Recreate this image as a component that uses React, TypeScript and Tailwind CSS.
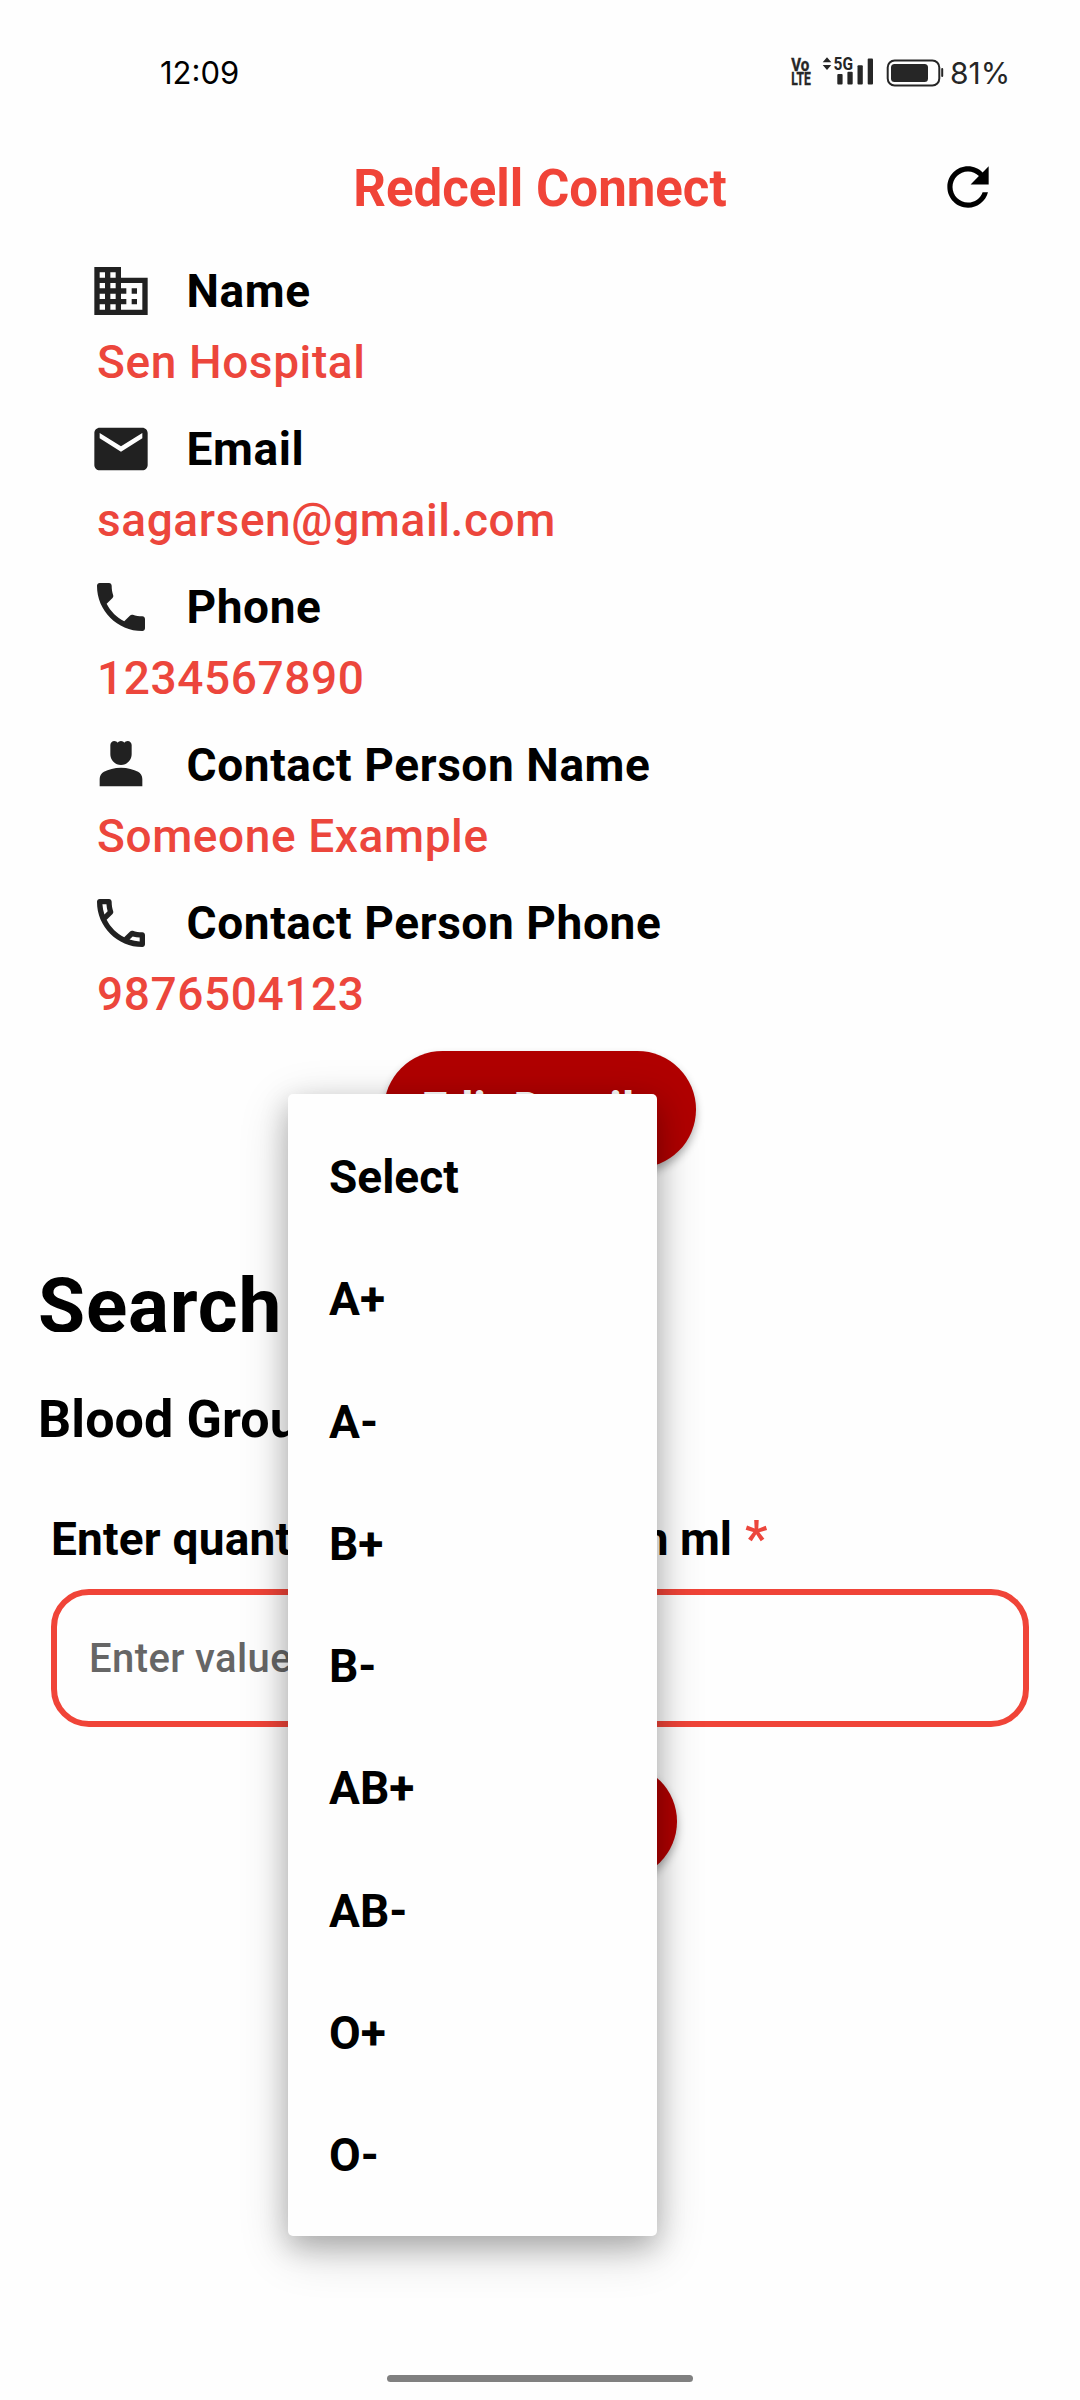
import React from "react";

const ICONS = {
  business:
    "M12 7V3H2v18h20V7H12zM6 19H4v-2h2v2zm0-4H4v-2h2v2zm0-4H4V9h2v2zm0-4H4V5h2v2zm4 12H8v-2h2v2zm0-4H8v-2h2v2zm0-4H8V9h2v2zm0-4H8V5h2v2zm10 12h-8v-2h2v-2h-2v-2h2v-2h-2V9h8v10zm-2-8h-2v2h2v-2zm0 4h-2v2h2v-2z",
  email:
    "M20 4H4c-1.1 0-1.99.9-1.99 2L2 18c0 1.1.9 2 2 2h16c1.1 0 2-.9 2-2V6c0-1.1-.9-2-2-2zm0 4l-8 5-8-5V6l8 5 8-5v2z",
  phone:
    "M6.62 10.79c1.44 2.83 3.76 5.14 6.59 6.59l2.2-2.2c.27-.27.67-.36 1.02-.24 1.12.37 2.33.57 3.57.57.55 0 1 .45 1 1V20c0 .55-.45 1-1 1-9.39 0-17-7.61-17-17 0-.55.45-1 1-1h3.5c.55 0 1 .45 1 1 0 1.25.2 2.45.57 3.57.11.35.03.74-.25 1.02l-2.2 2.2z",
  person:
    "M18.39 14.56C16.71 13.7 14.53 13 12 13s-4.71.7-6.39 1.56C4.61 15.07 4 16.1 4 17.22V20h16v-2.78c0-1.12-.61-2.15-1.61-2.66zM12 12c2.21 0 4-1.79 4-4V4.5C16 3.67 15.33 3 14.5 3c-.52 0-.98.27-1.25.67C12.98 3.27 12.52 3 12 3s-.98.27-1.25.67C10.48 3.27 10.02 3 9.5 3 8.67 3 8 3.67 8 4.5V8c0 2.21 1.79 4 4 4z",
  phoneOutline:
    "M6.54 5c.06.89.21 1.76.45 2.59l-1.2 1.2c-.41-1.2-.67-2.47-.76-3.79h1.51m9.86 12.02c.85.24 1.72.39 2.6.45v1.49c-1.32-.09-2.59-.35-3.8-.75l1.2-1.19M7.5 3H4c-.55 0-1 .45-1 1 0 9.39 7.61 17 17 17 .55 0 1-.45 1-1v-3.49c0-.55-.45-1-1-1-1.24 0-2.45-.2-3.57-.57-.1-.04-.21-.05-.31-.05-.26 0-.51.1-.71.29l-2.2 2.2c-2.83-1.45-5.15-3.76-6.59-6.59l2.2-2.2c.28-.28.36-.67.25-1.02C8.7 6.45 8.5 5.25 8.5 4c0-.55-.45-1-1-1z",
  refresh:
    "M17.65 6.35C16.2 4.9 14.21 4 12 4c-4.42 0-7.99 3.58-7.99 8s3.57 8 7.99 8c3.73 0 6.84-2.55 7.73-6h-2.08c-.82 2.33-3.04 4-5.65 4-3.31 0-6-2.69-6-6s2.69-6 6-6c1.66 0 3.14.69 4.22 1.78L13 11h7V4l-2.35 2.35z",
};

function Icon({ name, className }: { name: keyof typeof ICONS; className: string }) {
  return (
    <svg viewBox="0 0 24 24" fill="currentColor" className={className}>
      <path d={ICONS[name]} />
    </svg>
  );
}

function StatusBar() {
  return (
    <div className="flex h-[144px] items-start justify-between pl-[160px] pr-[72px] pt-[53px] text-[#262626]">
      <span className="font-['Inter'] text-[31px] leading-[40px] text-black">12:09</span>
      <div className="flex items-start">
        <svg width="156" height="40" viewBox="790 53 156 40" fill="#262626" fontFamily="Roboto, sans-serif" fontWeight="700">
          <text x="791.3" y="71.3" fontSize="17.5" textLength="18" lengthAdjust="spacingAndGlyphs" stroke="#262626" strokeWidth="0.4">Vo</text>
          <text x="791.3" y="85.2" fontSize="17.5" textLength="19.5" lengthAdjust="spacingAndGlyphs" stroke="#262626" strokeWidth="0.4">LTE</text>
          <path d="M822.7 62.3 827 57.3l4.3 5zM822.7 65l4.3 5 4.3-5z" />
          <text x="833.5" y="70.3" fontSize="18" textLength="19.5" lengthAdjust="spacingAndGlyphs">5G</text>
          <rect x="837.3" y="74" width="5.3" height="10.6" rx="1" />
          <rect x="847.4" y="71.8" width="5.3" height="12.8" rx="1" />
          <rect x="857.5" y="65.3" width="5.3" height="19.3" rx="1" />
          <rect x="867.7" y="58.5" width="5.3" height="26.1" rx="1" />
          <rect x="887.7" y="60.4" width="51.6" height="25.2" rx="7" fill="none" stroke="#262626" strokeWidth="2" />
          <rect x="891" y="64" width="37" height="18" rx="3.5" />
          <rect x="941.2" y="68" width="2" height="9" rx="1" />
        </svg>
        <span className="ml-[4px] w-[58px] whitespace-nowrap font-['Inter'] text-[30px] leading-[40px]">81%</span>
      </div>
    </div>
  );
}

const DETAILS: { icon: keyof typeof ICONS; label: string; value: string }[] = [
  { icon: "business", label: "Name", value: "Sen Hospital" },
  { icon: "email", label: "Email", value: "sagarsen@gmail.com" },
  { icon: "phone", label: "Phone", value: "1234567890" },
  { icon: "person", label: "Contact Person Name", value: "Someone Example" },
  { icon: "phoneOutline", label: "Contact Person Phone", value: "9876504123" },
];

const OPTIONS = ["Select", "A+", "A-", "B+", "B-", "AB+", "AB-", "O+", "O-"];

export default function App() {
  return (
    <div className="relative flex h-[2400px] w-[1080px] flex-col overflow-hidden bg-[#fefefe] font-['Roboto',sans-serif] text-black">
      <StatusBar />

      <header className="grid h-[115px] grid-cols-[1fr_auto_1fr] items-start">
        <span />
        <h1 className="pt-[15px] text-[51px] font-bold leading-[60px] text-[#f04438]">Redcell Connect</h1>
        <Icon name="refresh" className="mr-[81px] mt-[12px] size-[62px] justify-self-end" />
      </header>

      <section className="flex flex-col pl-[89px]">
        {DETAILS.map((d) => (
          <div key={d.label} className="mb-[16px]">
            <div className="flex h-[64px] items-center">
              <Icon name={d.icon} className="size-[64px] text-[#212121]" />
              <span className="ml-[33.5px] pb-[1px] text-[46px] font-bold leading-[60px] tracking-[0.6px]">{d.label}</span>
            </div>
            <div className="pl-[8px] text-[46px] font-medium leading-[78px] tracking-[0.6px] text-[#ec463c]">{d.value}</div>
          </div>
        ))}
      </section>

      <button className="mt-[2px] h-[117px] w-[312px] self-center rounded-full bg-[#b00000] text-[46px] font-bold leading-[117px] tracking-[0.3px] text-white shadow-[0_5px_8px_rgba(0,0,0,0.3)]">
        Edit Details
      </button>

      <div className="mt-[82px] flex h-[82px] items-end overflow-hidden pl-[38px]">
        <h2 className="text-[76.5px] font-bold leading-[52px] tracking-[0.8px]">Search Blood</h2>
      </div>

      <div className="mt-[58px] pl-[38px] text-[52px] font-bold leading-[60px] tracking-[0.1px]">Blood Group</div>

      <div className="mt-[59px] flex pl-[51px] text-[46px] font-bold leading-[60px]">
        <span className="mr-[13px] flex w-[681px] justify-between whitespace-nowrap">
          <span className="tracking-[0.2px]">Enter quantity you require</span>
          <span>in ml</span>
        </span>
        <span className="text-[50px] font-semibold text-[#ec463c]">*</span>
      </div>

      <div className="mx-[51px] mt-[20px] flex h-[138px] items-center rounded-[38px] border-[6.5px] border-[#f04438] pl-[32px] pt-[1px] text-[40px] font-medium leading-[60px] tracking-[0.4px] text-[#666666]">
        Enter value
      </div>

      <button className="mt-[37px] h-[115px] w-[273px] self-center rounded-full bg-[#b00000] text-[46px] font-bold leading-[115px] text-white shadow-[0_5px_8px_rgba(0,0,0,0.3)]">
        Search
      </button>

      <div className="mb-[18px] mt-auto h-[7px] w-[306px] self-center rounded-full bg-[#808080]" />

      <ul className="absolute left-[288px] top-[1094px] flex h-[1142px] w-[369px] flex-col rounded-[5px] bg-[#fefefe] pt-[22px] shadow-[0_14px_50px_rgba(0,0,0,0.2),0_10px_28px_rgba(0,0,0,0.22)]">
        {OPTIONS.map((o) => (
          <li key={o} className="h-[122.25px] pl-[41px] text-[46px] font-bold leading-[122px]">
            {o}
          </li>
        ))}
      </ul>
    </div>
  );
}
